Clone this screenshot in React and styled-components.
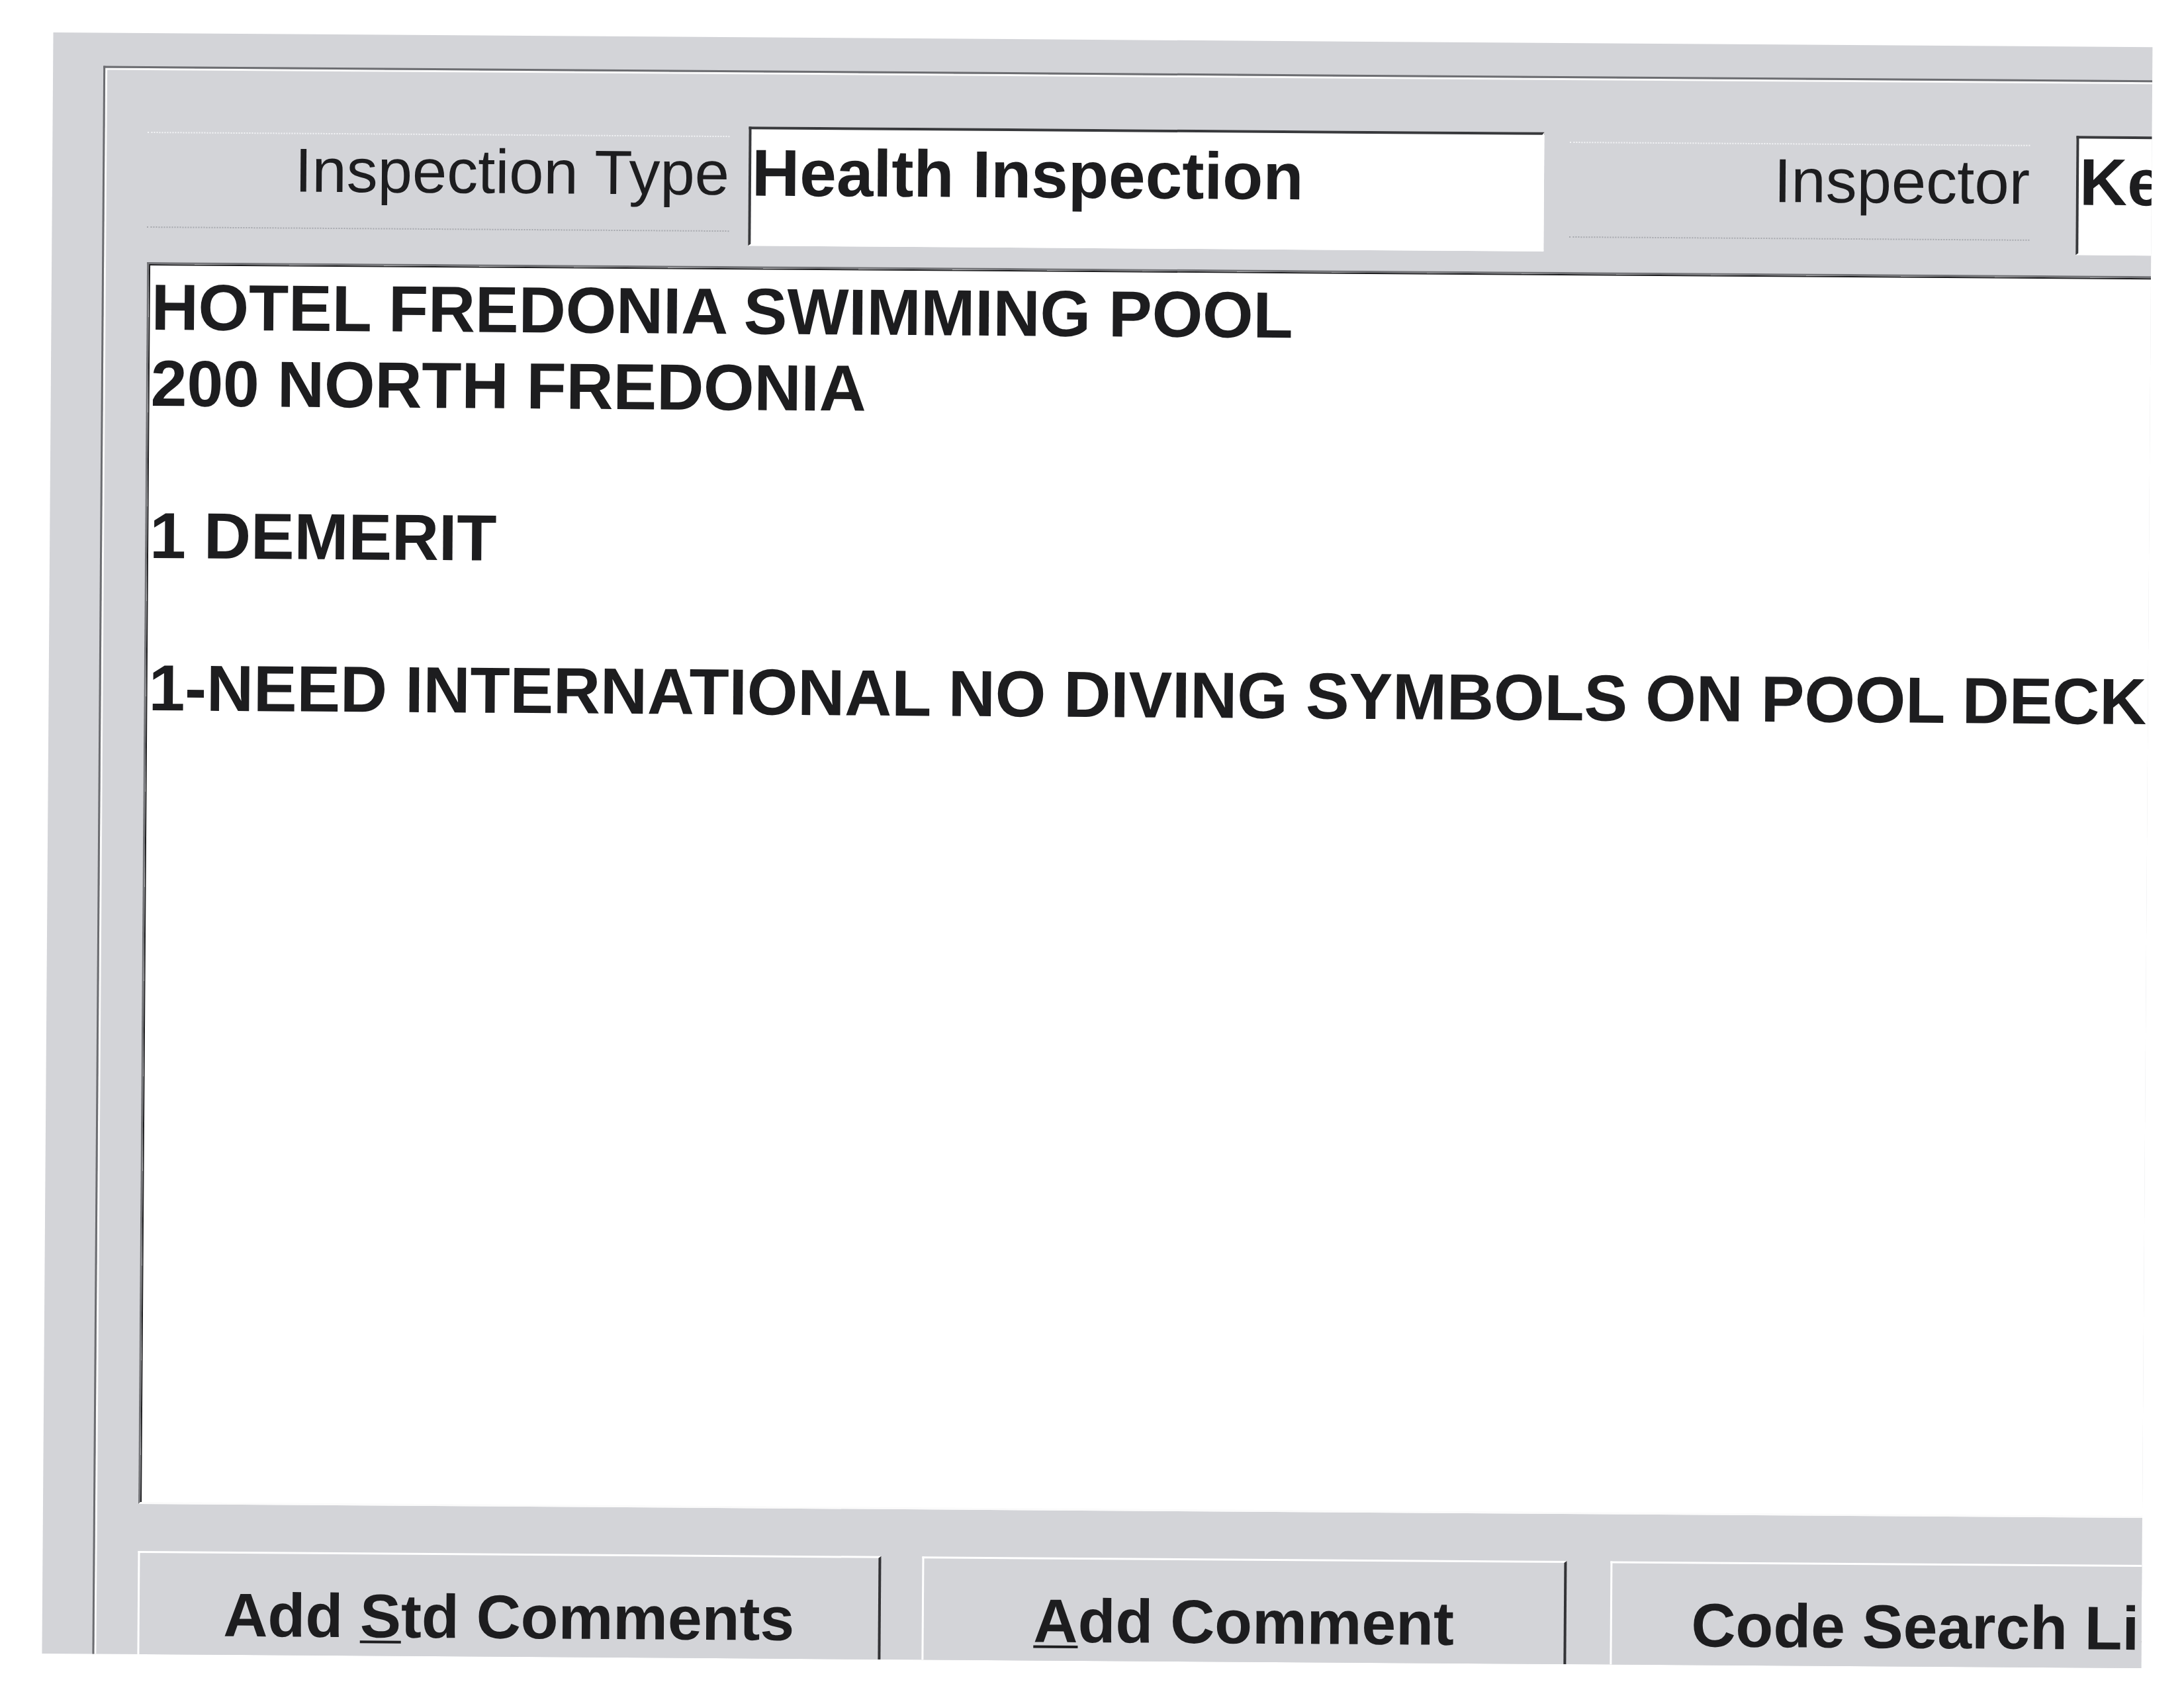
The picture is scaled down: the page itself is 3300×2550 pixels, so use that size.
import React from "react";
import styled, { createGlobalStyle } from "styled-components";

const Global = createGlobalStyle`
  *, *::before, *::after { box-sizing: border-box; }
  html, body { margin: 0; padding: 0; background: #ffffff; }
  body { width: 3300px; height: 2550px; overflow: hidden; font-family: "Liberation Sans", Arial, sans-serif; }
`;

const Page = styled.div`
  width: 3300px;
  height: 2550px;
  padding: 60px 0 0 72px;
  background: #ffffff;
  transform: rotate(0.4deg);
  transform-origin: 1650px 1275px;
`;

const Window = styled.div`
  width: 3172px;
  height: 2449px;
  background: #d3d4d8;
  overflow: hidden;
  padding: 50px 0 0 76px;
`;

const GroupFrame = styled.div`
  width: 3300px;
  height: 2600px;
  border-top: 3px solid #6c6d71;
  border-left: 3px solid #6c6d71;
  box-shadow: inset 3px 3px 0 #fbfbfb;
  padding: 82px 0 0 65px;
`;

const FieldRow = styled.div`
  display: flex;
  align-items: flex-start;
  height: 180px;
`;

const FieldLabel = styled.div`
  flex-shrink: 0;
  width: ${(p) => p.$w}px;
  margin-left: ${(p) => p.$gap || 0}px;
  margin-top: 14px;
  height: 145px;
  border-top: 2px dotted #f3f4f6;
  border-bottom: 2px dotted #a6a8ad;
  padding-top: 2px;
  text-align: right;
  white-space: nowrap;
  font: 400 94px/105px "Liberation Sans", Arial, sans-serif;
  color: #1d1d1f;
`;

const FieldValue = styled.div`
  flex-shrink: 0;
  width: ${(p) => p.$w}px;
  margin-left: ${(p) => p.$gap || 0}px;
  height: 180px;
  background: #ffffff;
  border-top: 4px solid #38393c;
  border-left: 4px solid #38393c;
  border-right: 3px solid #ffffff;
  border-bottom: 3px solid #ffffff;
  padding: 9px 0 0 1px;
  white-space: nowrap;
  overflow: hidden;
  font: 700 100px/112px "Liberation Sans", Arial, sans-serif;
  color: #1d1d1f;
`;

const CommentArea = styled.div`
  margin-top: 31px;
  width: 3200px;
  height: 1876px;
  background: #ffffff;
  border-top: 3px solid #737478;
  border-left: 3px solid #737478;
  border-bottom: 3px solid #fbfbfb;
  box-shadow: inset 2px 2px 0 #1e1e20;
  padding: 8px 0 0 4px;
  white-space: pre;
  font: 700 98.5px/115px "Liberation Sans", Arial, sans-serif;
  letter-spacing: -0.15px;
  color: #1d1d1f;
`;

const ButtonRow = styled.div`
  display: flex;
  align-items: flex-start;
  margin-top: 71px;
`;

const CmdButton = styled.div`
  flex-shrink: 0;
  margin-left: ${(p) => p.$gap || 0}px;
  width: ${(p) => p.$w}px;
  height: 190px;
  background: #d3d4d8;
  border-top: 3px solid #ffffff;
  border-left: 3px solid #ffffff;
  border-right: 4px solid #333336;
  border-bottom: 4px solid #333336;
  padding-top: 40px;
  text-align: center;
  white-space: nowrap;
  cursor: default;
  font: 700 93px/107px "Liberation Sans", Arial, sans-serif;
  color: #1d1d1f;

  u {
    text-decoration: underline;
    text-decoration-thickness: 4px;
    text-underline-offset: 5px;
  }
`;

const lines = [
  "HOTEL FREDONIA SWIMMING POOL",
  "200 NORTH FREDONIA",
  "",
  "1 DEMERIT",
  "",
  "1-NEED INTERNATIONAL NO DIVING SYMBOLS ON POOL DECK",
].join("\n");

export default function App() {
  return (
    <>
      <Global />
      <Page>
        <Window>
          <GroupFrame>
            <FieldRow>
              <FieldLabel $w={879}>Inspection Type</FieldLabel>
              <FieldValue $w={1202} $gap={29}>Health Inspection</FieldValue>
              <FieldLabel $w={695} $gap={39}>Inspector</FieldLabel>
              <FieldValue $w={900} $gap={70}>Kevin</FieldValue>
            </FieldRow>
            <CommentArea>{lines}</CommentArea>
            <ButtonRow>
              <CmdButton role="button" $w={1123}>
                Add <u>S</u>td Comments
              </CmdButton>
              <CmdButton role="button" $w={974} $gap={62}>
                <u>A</u>dd Comment
              </CmdButton>
              <CmdButton role="button" $w={1006} $gap={66}>
                Code Search List
              </CmdButton>
            </ButtonRow>
          </GroupFrame>
        </Window>
      </Page>
    </>
  );
}
